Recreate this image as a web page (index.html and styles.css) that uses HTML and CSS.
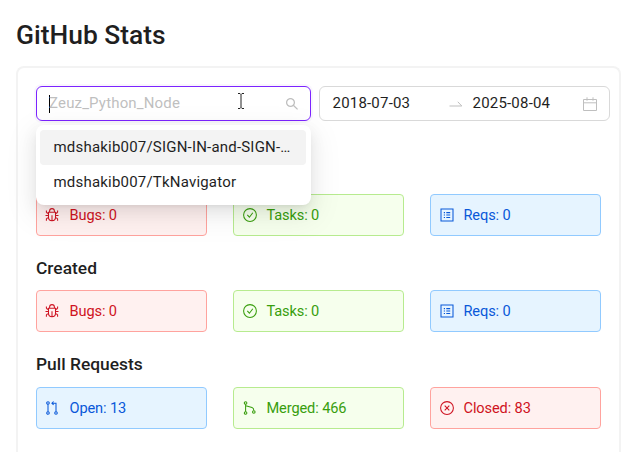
FILE: index.html
```html
<!DOCTYPE html>
<html lang="en">
<head>
<meta charset="utf-8">
<title>GitHub Stats</title>
<link rel="stylesheet" href="styles.css">
</head>
<body>
<svg class="sprite" aria-hidden="true">
  <symbol id="bug" viewBox="0 0 14 14"><path d="M3.5 4.2h7v5a3.5 3.5 0 0 1-7 0zM4.6 4.1V3a2.4 2.4 0 0 1 4.8 0v1.1M7 7.2v5.4M3.5 5.1H2.3L1.4 4V2.6M10.5 5.1h1.2l.9-1.1V2.6M.5 7.5h3M10.5 7.5h3M3.7 10H2.3l-.9 1v1.7M10.3 10h1.4l.9 1v1.7"/></symbol>
  <symbol id="check" viewBox="0 0 14 14"><circle cx="7" cy="7" r="6.4"/><path d="M4.3 6.9 6.4 9.2 9.8 4.8"/></symbol>
  <symbol id="close" viewBox="0 0 14 14"><circle cx="7" cy="7" r="6.4"/><path d="m4.7 4.6 4.6 4.8M9.3 4.6 4.7 9.4"/></symbol>
  <symbol id="list" viewBox="0 0 14 14"><path d="M1 1h12v12H1zM6.3 4.6h3.9M6.3 7h3.9M6.3 9.4h3.9M3.8 4.6H5M3.8 7H5M3.8 9.4H5"/></symbol>
  <symbol id="pull" viewBox="0 0 14 14"><circle cx="3" cy="2" r="1.3"/><circle cx="3" cy="12" r="1.3"/><circle cx="11" cy="12" r="1.3"/><path d="M3 3.3v7.4M11 10.7V2.2H7M8.6.5 6.9 2.2l1.7 1.7"/></symbol>
  <symbol id="merge" viewBox="0 0 14 14"><circle cx="2.6" cy="2" r="1.3"/><circle cx="2.6" cy="12" r="1.3"/><circle cx="10.8" cy="11" r="1.3"/><path d="M2.6 3.3v7.4M2.8 4.8l6.2 1.8q1.8.6 1.8 3"/></symbol>
</svg>
<main class="page">
  <h1 class="title">GitHub Stats</h1>
  <section class="card">
    <div class="filters">
      <div class="select">
        <span class="caret"></span>
        <span class="placeholder">Zeuz_Python_Node</span>
        <svg class="search" viewBox="0 0 12 12"><circle cx="4.5" cy="4.5" r="3.9"/><path d="m7.3 7.3 4.3 4.1"/></svg>
        <svg class="pointer" viewBox="0 0 8 18"><path class="halo" d="M1 1.5h2l1 1 1-1h2M4 2.5v13M1 16.5h2l1-1 1 1h2"/><path d="M1 1.5h2l1 1 1-1h2M4 2.5v13M1 16.5h2l1-1 1 1h2"/></svg>
        <div class="dropdown">
          <div class="option active">mdshakib007/SIGN-IN-and-SIGN-UP</div>
          <div class="option">mdshakib007/TkNavigator</div>
        </div>
      </div>
      <div class="range">
        <span class="date">2018-07-03</span>
        <svg class="arrow" viewBox="0 0 14 6"><path d="M.5 5h12.3L8.8.8"/></svg>
        <span class="date">2025-08-04</span>
        <svg class="calendar" viewBox="0 0 14 14"><path d="M.5 2.5h13v11H.5zM.5 5.8h13M4 .3v3.4M10 .3v3.4"/></svg>
      </div>
    </div>
    <div class="row first">
      <div class="tag red"><svg class="icon"><use href="#bug"/></svg>Bugs: 0</div>
      <div class="tag green"><svg class="icon"><use href="#check"/></svg>Tasks: 0</div>
      <div class="tag blue"><svg class="icon"><use href="#list"/></svg>Reqs: 0</div>
    </div>
    <h2 class="heading">Created</h2>
    <div class="row">
      <div class="tag red"><svg class="icon"><use href="#bug"/></svg>Bugs: 0</div>
      <div class="tag green"><svg class="icon"><use href="#check"/></svg>Tasks: 0</div>
      <div class="tag blue"><svg class="icon"><use href="#list"/></svg>Reqs: 0</div>
    </div>
    <h2 class="heading">Pull Requests</h2>
    <div class="row">
      <div class="tag blue"><svg class="icon"><use href="#pull"/></svg>Open: 13</div>
      <div class="tag green"><svg class="icon"><use href="#merge"/></svg>Merged: 466</div>
      <div class="tag red"><svg class="icon"><use href="#close"/></svg>Closed: 83</div>
    </div>
  </section>
</main>
</body>
</html>
```
FILE: styles.css
```css
* { box-sizing: border-box; }
body {
  margin: 0;
  background: #fff;
  color: #1f1f1f;
  font-family: Roboto, "Liberation Sans", sans-serif;
}
svg { fill: none; stroke: currentColor; flex: none; }
.sprite { position: absolute; width: 0; height: 0; }
.page { padding: 18px 11px 0 16px; }
.title { margin: 0 0 14px; font-size: 26.4px; line-height: 34px; font-weight: 500; }
.card {
  height: 386px;
  padding: 18px 9px 0 18px;
  border: 2px solid #f3f3f3;
  border-bottom: 0;
  border-radius: 8px 8px 0 0;
}
.filters { display: flex; gap: 8px; }
.select {
  position: relative;
  display: flex;
  align-items: center;
  width: 275px;
  height: 35px;
  padding: 0 12px;
  border: 1px solid #7c24ff;
  border-radius: 6px;
  box-shadow: 0 0 0 2px #9254de0d;
}
.caret { width: 1px; height: 18px; background: #000; }
.placeholder { flex: 1; margin-left: -1px; padding-bottom: 2px; font-size: 15px; color: #bfbfbf; letter-spacing: .17px; }
.search { width: 12px; height: 12px; color: #bfbfbf; stroke-width: 1.3; }
.pointer { position: absolute; left: 200px; top: 5px; width: 8px; height: 18px; color: #222; }
.pointer .halo { stroke: #fff; stroke-width: 3; }
.dropdown {
  position: absolute;
  z-index: 2;
  top: 38px;
  left: -1px;
  width: 275px;
  height: 80px;
  padding: 5px 5px 5px 4px;
  background: #fff;
  border-radius: 8px;
  box-shadow: 0 6px 16px #00000014, 0 3px 6px -4px #0000001f, 0 9px 28px 8px #0000000d;
}
.option {
  height: 35px;
  padding: 0 13.5px;
  overflow: hidden;
  border-radius: 4px;
  font-size: 15px;
  line-height: 34px;
  letter-spacing: .2px;
  white-space: nowrap;
  text-overflow: ellipsis;
}
.active { background: #f3f3f3; }
.range {
  display: flex;
  align-items: center;
  width: 291px;
  height: 35px;
  padding: 0 12px 0 12.5px;
  border: 1px solid #d9d9d9;
  border-radius: 6px;
}
.date { width: 116px; padding-bottom: 2px; font-size: 15px; letter-spacing: .2px; }
.arrow { width: 14px; height: 6px; margin-right: 10px; color: #bfbfbf; }
.calendar { width: 14px; height: 14px; margin-left: -6px; color: #bfbfbf; }
.row { display: grid; grid-template-columns: repeat(3, 171px); gap: 26px; }
.first { margin-top: 73px; }
.heading { margin: 20.9px 0 11.7px; font-size: 17.4px; line-height: 22px; font-weight: 500; }
.row { margin-right: -1px; }
.tag {
  display: flex;
  align-items: center;
  gap: 10px;
  height: 41.8px;
  padding: 0 8.5px;
  border: 1px solid;
  border-radius: 4px;
  font-size: 14.6px;
  letter-spacing: -.12px;
}
.tag:first-child { padding-left: 8px; gap: 10.5px; }
.icon { width: 14px; height: 14px; stroke-width: 1.05; }
.red { color: #cf1322; background: #fff1f0; border-color: #ffa39e; }
.green { color: #389e0d; background: #f6ffed; border-color: #b7eb8f; }
.blue { color: #0958d9; background: #e6f4ff; border-color: #91caff; }
```
